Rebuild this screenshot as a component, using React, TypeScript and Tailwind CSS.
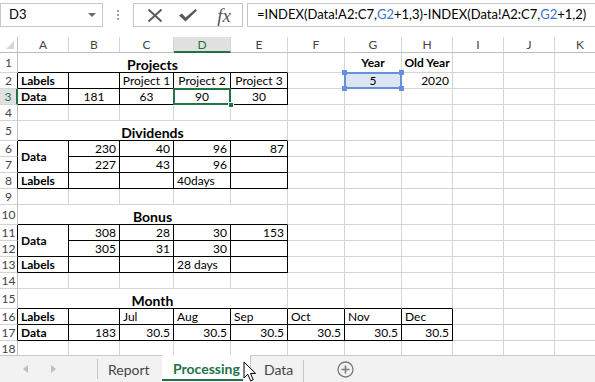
import React from "react";

type B = "k" | "g" | "n";
type Cell = {
  t?: string;
  span?: number;
  rs?: number;
  a?: "l" | "r" | "c";
  bold?: boolean;
  title?: boolean;
  r?: B;
  b?: B;
  sel?: "green" | "blue";
};

function rCls(r: B) {
  if (r === "k") return "border-r border-r-black";
  if (r === "g") return "border-r border-r-[#d4d4d4]";
  return "";
}
function bCls(b: B) {
  if (b === "k") return "border-b border-b-black";
  if (b === "g") return "border-b border-b-[#d4d4d4]";
  return "";
}
function aCls(a: "l" | "r" | "c") {
  if (a === "l") return "justify-start pl-[3px]";
  if (a === "r") return "justify-end pr-[3px]";
  return "justify-center";
}
function spanCls(n?: number) {
  if (n === 5) return "col-span-5";
  if (n === 2) return "col-span-2";
  return "";
}
function rsCls(n?: number) {
  if (n === 2) return "row-span-2";
  return "";
}

const gray = (n: number): Cell[] => Array.from({ length: n }, () => ({}));
const K = (c: Cell): Cell => ({ r: "k", b: "k", ...c });

const rows: { n: number; hk?: boolean; sel?: boolean; cells: Cell[] }[] = [
  {
    n: 1,
    cells: [
      { t: "Projects", span: 5, title: true, a: "c", r: "g", b: "k" },
      {},
      { t: "Year", bold: true, a: "c" },
      { t: "Old Year", bold: true, a: "c" },
      ...gray(3),
    ],
  },
  {
    n: 2,
    hk: true,
    cells: [
      K({ t: "Labels", bold: true, a: "l" }),
      K({}),
      K({ t: "Project 1", a: "c" }),
      K({ t: "Project 2", a: "c" }),
      K({ t: "Project 3", a: "c" }),
      {},
      { t: "5", a: "c", sel: "blue" },
      { t: "2020", a: "r" },
      ...gray(3),
    ],
  },
  {
    n: 3,
    hk: true,
    sel: true,
    cells: [
      K({ t: "Data", bold: true, a: "l" }),
      K({ t: "181", a: "c" }),
      K({ t: "63", a: "c" }),
      K({ t: "90", a: "c", sel: "green" }),
      K({ t: "30", a: "c" }),
      ...gray(6),
    ],
  },
  { n: 4, cells: gray(11) },
  {
    n: 5,
    cells: [{ t: "Dividends", span: 5, title: true, a: "c", r: "g", b: "k" }, ...gray(6)],
  },
  {
    n: 6,
    hk: true,
    cells: [
      K({ t: "Data", bold: true, a: "l", rs: 2 }),
      K({ t: "230", a: "r" }),
      K({ t: "40", a: "r" }),
      K({ t: "96", a: "r" }),
      K({ t: "87", a: "r" }),
      ...gray(6),
    ],
  },
  {
    n: 7,
    hk: true,
    cells: [
      K({ t: "227", a: "r" }),
      K({ t: "43", a: "r" }),
      K({ t: "96", a: "r" }),
      K({}),
      ...gray(6),
    ],
  },
  {
    n: 8,
    hk: true,
    cells: [
      K({ t: "Labels", bold: true, a: "l" }),
      K({}),
      K({}),
      K({ t: "40days", a: "l" }),
      K({}),
      ...gray(6),
    ],
  },
  { n: 9, cells: gray(11) },
  {
    n: 10,
    cells: [{ t: "Bonus", span: 5, title: true, a: "c", r: "g", b: "k" }, ...gray(6)],
  },
  {
    n: 11,
    hk: true,
    cells: [
      K({ t: "Data", bold: true, a: "l", rs: 2 }),
      K({ t: "308", a: "r" }),
      K({ t: "28", a: "r" }),
      K({ t: "30", a: "r" }),
      K({ t: "153", a: "r" }),
      ...gray(6),
    ],
  },
  {
    n: 12,
    hk: true,
    cells: [
      K({ t: "305", a: "r" }),
      K({ t: "31", a: "r" }),
      K({ t: "30", a: "r" }),
      K({}),
      ...gray(6),
    ],
  },
  {
    n: 13,
    hk: true,
    cells: [
      K({ t: "Labels", bold: true, a: "l" }),
      K({}),
      K({}),
      K({ t: "28 days", a: "l" }),
      K({}),
      ...gray(6),
    ],
  },
  { n: 14, cells: gray(11) },
  {
    n: 15,
    cells: [
      { t: "Month", span: 5, title: true, a: "c", r: "g", b: "k" },
      { b: "k" },
      { b: "k" },
      { b: "k" },
      ...gray(3),
    ],
  },
  {
    n: 16,
    hk: true,
    cells: [
      K({ t: "Labels", bold: true, a: "l" }),
      K({}),
      K({ t: "Jul", a: "l" }),
      K({ t: "Aug", a: "l" }),
      K({ t: "Sep", a: "l" }),
      K({ t: "Oct", a: "l" }),
      K({ t: "Nov", a: "l" }),
      K({ t: "Dec", a: "l" }),
      ...gray(3),
    ],
  },
  {
    n: 17,
    hk: true,
    cells: [
      K({ t: "Data", bold: true, a: "l" }),
      K({ t: "183", a: "r" }),
      K({ t: "30.5", a: "r" }),
      K({ t: "30.5", a: "r" }),
      K({ t: "30.5", a: "r" }),
      K({ t: "30.5", a: "r" }),
      K({ t: "30.5", a: "r" }),
      K({ t: "30.5", a: "r" }),
      ...gray(3),
    ],
  },
  { n: 18, cells: gray(11) },
];

const colLetters = ["A", "B", "C", "D", "E", "F", "G", "H", "I", "J", "K"];

function RowHeader({ n, hk, sel }: { n: number; hk?: boolean; sel?: boolean }) {
  if (sel) {
    return (
      <div className="flex items-center justify-center bg-[#e1e1e1] border-b border-b-[#d4d4d4] border-r-2 border-r-[#217346] text-[12px] text-[#217346]">
        {n}
      </div>
    );
  }
  return (
    <div
      className={
        "flex items-center justify-center border-b border-b-[#d4d4d4] text-[12px] text-[#444] " +
        (hk ? "border-r border-r-black" : "border-r border-r-[#bdbdbd]")
      }
    >
      {n}
    </div>
  );
}

function GridCell({ c }: { c: Cell }) {
  const r = c.r ?? "g";
  const b = c.b ?? "g";
  const a = c.a ?? "l";
  return (
    <div
      className={[
        "relative flex items-center whitespace-nowrap overflow-visible",
        rCls(r),
        bCls(b),
        aCls(a),
        spanCls(c.span),
        rsCls(c.rs),
        c.title ? "text-[14px] font-bold pt-[3px]" : "text-[12px]",
        c.bold ? "font-bold" : "",
        c.sel === "blue" ? "bg-[#dbe5f4]" : "",
      ].join(" ")}
    >
      {c.t}
      {c.sel === "green" && (
        <>
          <div className="absolute -inset-px z-10 border-2 border-[#217346]" />
          <div className="absolute -right-[4px] -bottom-[4px] z-20 h-[6px] w-[6px] border border-white bg-[#217346]" />
        </>
      )}
      {c.sel === "blue" && (
        <>
          <div className="absolute -inset-px z-10 border-2 border-[#6590da]" />
          <div className="absolute -left-[3px] -top-[3px] z-20 h-[5px] w-[5px] bg-[#6590da]" />
          <div className="absolute -right-[3px] -top-[3px] z-20 h-[5px] w-[5px] bg-[#6590da]" />
          <div className="absolute -left-[3px] -bottom-[3px] z-20 h-[5px] w-[5px] bg-[#6590da]" />
          <div className="absolute -right-[3px] -bottom-[3px] z-20 h-[5px] w-[5px] bg-[#6590da]" />
        </>
      )}
    </div>
  );
}

function Toolbar() {
  return (
    <div className="flex h-[37px] items-start pt-[3px]">
      <div className="flex h-[24px] w-[103px] items-center justify-between border border-[#c6c6c6] pl-[8px] pr-[6px] text-[13px] text-black">
        <span>D3</span>
        <svg width="8" height="5" viewBox="0 0 8 5">
          <polygon points="0,0 8,0 4,4" fill="#6a6a6a" />
        </svg>
      </div>
      <div className="flex h-[24px] w-[30px] flex-col items-center justify-center gap-[2px]">
        <div className="h-[2px] w-[2px] bg-[#a0a0a0]" />
        <div className="h-[2px] w-[2px] bg-[#a0a0a0]" />
        <div className="h-[2px] w-[2px] bg-[#a0a0a0]" />
      </div>
      <div className="flex h-[24px] w-[110px] items-center border border-[#c6c6c6]">
        <div className="flex w-[36px] justify-center pl-[6px]">
          <svg width="16" height="15" viewBox="0 0 16 15">
            <path d="M1.5 1.5 L14.5 13.5 M14.5 1.5 L1.5 13.5" stroke="#5a5a5a" strokeWidth="2" />
          </svg>
        </div>
        <div className="flex w-[36px] justify-center">
          <svg width="20" height="14" viewBox="0 0 20 14">
            <path d="M1 7.5 L4 5.5 L7.5 9.5 L17.5 1 L19 2.5 L7.5 13.5 Z" fill="#5a5a5a" />
          </svg>
        </div>
        <div className="flex w-[36px] justify-center font-['Liberation_Serif',serif] text-[19px] italic leading-none text-[#555]">
          fx
        </div>
      </div>
      <div className="ml-[4px] flex h-[24px] flex-1 items-center border border-r-0 border-[#c6c6c6] pl-[9px] text-[13px] text-black whitespace-nowrap">
        =INDEX(Data!A2:C7,<span className="text-[#3b73d0]">G2</span>+1,3)-INDEX(Data!A2:C7,
        <span className="text-[#3b73d0]">G2</span>+1,2)
      </div>
    </div>
  );
}

function Sheet() {
  return (
    <div className="h-[318px] overflow-hidden">
      <div className="grid w-[606px] grid-cols-[18px_51px_51px_54px_57px_57px_57px_57px_51px_51px_51px_51px] grid-rows-[16px_20px_16px_16px_16px_20px_16px_16px_16px_16px_20px_16px_16px_16px_16px_20px_16px_16px_16px]">
        <div className="relative border-r border-r-[#bdbdbd] border-b border-b-[#bdbdbd]">
          <svg className="absolute right-[3px] bottom-[3px]" width="8" height="8" viewBox="0 0 8 8">
            <polygon points="8,0 8,8 0,8" fill="#d6d6d6" />
          </svg>
        </div>
        {colLetters.map((l) =>
          l === "D" ? (
            <div
              key={l}
              className="flex items-center justify-center border-r border-r-[#d4d4d4] border-b-2 border-b-[#217346] bg-[#e1e1e1] pt-[2px] text-[12px] text-[#217346]"
            >
              {l}
            </div>
          ) : (
            <div
              key={l}
              className="flex items-center justify-center border-r border-r-[#d4d4d4] border-b border-b-[#bdbdbd] pt-[1px] text-[12px] text-[#444]"
            >
              {l}
            </div>
          )
        )}
        {rows.map((row) => (
          <React.Fragment key={row.n}>
            <RowHeader n={row.n} hk={row.hk} sel={row.sel} />
            {row.cells.map((c, i) => (
              <GridCell key={i} c={c} />
            ))}
          </React.Fragment>
        ))}
      </div>
    </div>
  );
}

function Tabs() {
  return (
    <div className="relative flex h-[27px] items-stretch bg-[#f2f2f2]">
      <div className="flex w-[97px] items-center border-t border-t-[#c6c6c6]">
        <svg className="ml-[23px]" width="5" height="8" viewBox="0 0 5 8">
          <polygon points="5,0 5,8 0,4" fill="#c0c0c0" />
        </svg>
        <svg className="ml-[23px]" width="5" height="8" viewBox="0 0 5 8">
          <polygon points="0,0 0,8 5,4" fill="#c0c0c0" />
        </svg>
      </div>
      <div className="flex w-[65px] items-center border-t border-t-[#c6c6c6]">
        <div className="h-[20px] w-px bg-[#c6c6c6]" />
        <span className="ml-[10px] text-[14px] text-[#444]">Report</span>
      </div>
      <div className="relative flex w-[89px] items-center border-r border-r-[#c6c6c6] bg-white pl-[11px]">
        <span className="text-[14px] font-bold text-[#217346]">Processing</span>
        <div className="absolute bottom-[1px] left-0 h-[2px] w-[81px] bg-[#217346]" />
      </div>
      <div className="flex w-[52px] items-center border-t border-t-[#c6c6c6] pl-[13px]">
        <span className="text-[14px] text-[#444]">Data</span>
      </div>
      <div className="flex flex-1 items-center border-t border-t-[#c6c6c6]">
        <div className="h-[22px] w-px self-end bg-[#c6c6c6]" />
        <svg className="ml-[33px]" width="17" height="17" viewBox="0 0 17 17">
          <circle cx="8.5" cy="8.5" r="7.5" fill="none" stroke="#7a7a7a" strokeWidth="1.3" />
          <path d="M8.5 4.5 V12.5 M4.5 8.5 H12.5" stroke="#7a7a7a" strokeWidth="1.6" />
        </svg>
      </div>
      <svg className="absolute left-[243px] top-[6px]" width="14" height="22" viewBox="0 0 14 22">
        <path
          d="M1 1 L1 17 L4.8 13.3 L7.6 19.8 L10.2 18.7 L7.5 12.4 L12.6 12.4 Z"
          fill="white"
          stroke="black"
          strokeWidth="1"
          strokeLinejoin="round"
        />
      </svg>
    </div>
  );
}

export default function App() {
  return (
    <div className="relative h-[382px] w-[595px] overflow-hidden bg-white font-['Lato',sans-serif] text-black">
      <Toolbar />
      <Sheet />
      <Tabs />
    </div>
  );
}
